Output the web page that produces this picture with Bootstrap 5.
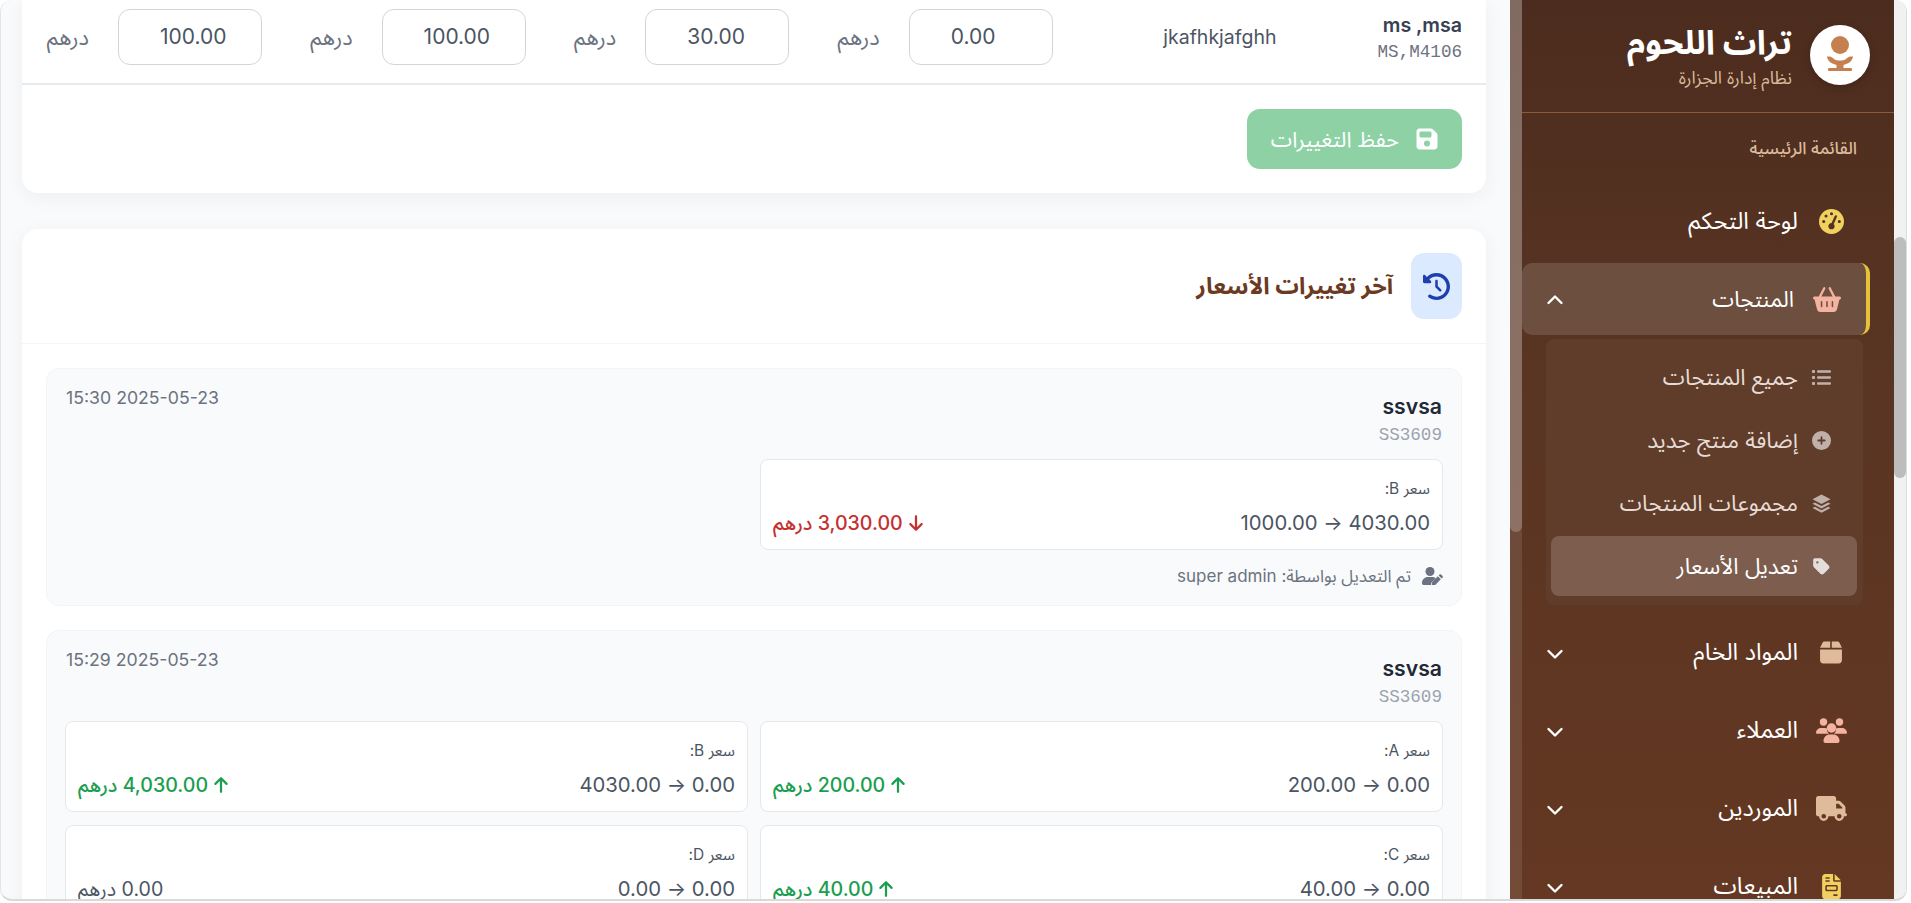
<!DOCTYPE html>
<html lang="ar" dir="rtl">
<head>
<meta charset="utf-8">
<title>تعديل الأسعار</title>
<link href="https://cdn.jsdelivr.net/npm/bootstrap@5.3.0/dist/css/bootstrap.min.css" rel="stylesheet">
<style>
html,body{height:100%;overflow:hidden;background:#fff}
body{font-family:"Inter","Noto Sans Arabic","DejaVu Sans",sans-serif;color:#374151;font-size:16px}
.app-frame{height:901px;width:1907px;margin-right:4px;border-bottom:2px solid #d9d9d9;border-left:1px solid #e5e5e5;border-right:1px solid #dcdcdc;border-radius:12px;overflow:hidden;background:#f9fafb}
/* scrollbars */
.sb-outer{width:12px;flex:none;background:#f1f1f1}
.sb-outer-thumb{height:241px;margin-top:237px;background:#bdbdbd;border-radius:6px}
.sb-inner{width:12px;flex:none;background:rgba(255,255,255,.1)}
.sb-inner-thumb{height:532px;background:rgba(255,255,255,.22);border-radius:0 0 6px 6px}
/* sidebar */
.side-wrap{width:384px;flex:none;background:linear-gradient(180deg,#4c2c1e 0%,#5a3523 45%,#643822 100%)}
.side-body{width:372px;flex:none;height:901px;overflow:hidden}
.side-head{height:113px;border-bottom:1px solid #8a5a3e;padding:25px 24px 0 0;gap:18px}
.logo-disc{width:60px;height:60px;border-radius:50%;background:#fff;flex:none;box-shadow:0 2px 8px rgba(0,0,0,.2)}
.brand-name{font-size:33.3px;font-weight:700;color:#fff;line-height:42px;margin-top:-4px}
.brand-sub{font-size:17.5px;color:#d9b99b;line-height:22px;margin-top:4px}
.menu-label{font-size:17px;font-weight:500;color:#dcbb9d;padding:24px 37px 0 0;line-height:22px;height:72px}
.side-item{height:72px;padding:0 47px 0 24px;margin-bottom:6px;color:#fff;font-size:23.5px;gap:17px;text-decoration:none}
.side-item:hover{color:#fff}
.side-ico{width:32px;flex:none;display:flex;justify-content:center}
.side-item.is-open{background:#6c4f3f;margin-right:24px;padding-right:23px;padding-left:24px;border-right:4px solid #e6c13e;border-radius:10px;margin-bottom:4px;font-size:22px}
.side-chev{margin-right:auto;width:18px;flex:none}
.sub-box{background:#603c2a;border-radius:8px;margin:0 31px 11px 24px;padding:8px 6px 9px 5px}
.sub-item{height:60px;margin-bottom:3px;padding:0 26px 0 0;gap:13px;color:#e6dcd5;font-size:22.3px;border-radius:8px;text-decoration:none}
.sub-item:last-child{margin-bottom:0}
.sub-item.is-on{background:#7c5d4e;color:#fff}
.sub-ico{width:20px;flex:none;display:flex;justify-content:center;opacity:.6}
.sub-item.is-on .sub-ico{opacity:.8}
/* main */
.main-pane{width:1509px;flex:none;padding:0 24px 0 21px}
.panel-box{background:#fff;border-radius:16px;box-shadow:0 4px 20px rgba(0,0,0,.05)}
.panel-top{border-radius:0 0 16px 16px;height:193px;margin-bottom:36px}
.prod-row{height:85px;border-bottom:2px solid #e9eaec;padding:9px 24px 0}
.prod-cell{flex:1 1 auto;min-width:0}
.prod-name{font-weight:600;font-size:19.6px;line-height:24px;color:#374151;margin-top:4px}
.prod-code{font-family:"Liberation Mono",monospace;font-size:17.6px;line-height:24px;color:#6b7280;margin-top:3px}
.batch-cell{flex:0 0 239px;text-align:center;line-height:56px;font-size:19.5px;color:#4b5563}
.price-cell{flex:0 0 263.6px;padding-right:47.6px;gap:29px;height:56px}
.price-input.form-control{width:144px;height:56px;flex:none;border:1px solid #d1d5db;border-radius:12px;text-align:left;font-size:21px;color:#4b5563;padding:0 0 2px 41px;font-family:inherit}
.unit-text{color:#6b7280;font-size:21.8px}
.foot-row{padding:24px}
.save-btn.btn{width:215px;height:60px;background:#8dd1a5;border:0;border-radius:13px;color:#fff;font-size:21.6px;opacity:1;padding:0 24px;gap:17px;display:flex;align-items:center;white-space:nowrap}
.save-btn svg{flex:none}
.head-row{padding:24px;border-bottom:1px solid #f3f4f6;height:115px;gap:18px}
.head-ico{width:51px;height:66px;background:#dbeafe;border-radius:13px;flex:none}
.head-title{font-size:23.4px;font-weight:700;color:#6b3a22;margin:0}
.list-body{padding:24px}
.log-card{background:#f9fafb;border:1px solid #f3f4f6;border-radius:13px;padding:20px 18px 17px;margin-bottom:24px}
.log-head{height:58px;margin-bottom:12px}
.log-name{font-size:21.2px;font-weight:600;color:#1f2937;line-height:30px;margin-top:2px;padding-right:1px}
.log-code{font-family:"Liberation Mono",monospace;font-size:17.6px;line-height:24px;color:#9ca3af;margin-top:2px;padding-right:1px}
.log-date{font-size:17.7px;line-height:20px;color:#6b7280;margin-top:-1px;padding-left:1px}
.diff-grid{display:grid;grid-template-columns:1fr 1fr;gap:13px 12px}
.diff-box{background:#fff;border:1px solid #e5e7eb;border-radius:8px;height:91px;padding:7px 12px 0}
.diff-label{font-size:15.5px;line-height:20px;color:#4b5563;margin-top:12px}
.diff-vals{margin-top:10px;line-height:28px;height:28px}
.diff-nums{font-size:20.3px;color:#4b5563}
.diff-delta{font-size:19.6px;font-weight:500;gap:5px}
.diff-delta svg{flex:none}
.delta-down{color:#c53030}
.delta-up{color:#1a9e4f}
.delta-none{color:#4b5563;font-weight:400}
.log-note{margin-top:14px;line-height:24px;font-size:17px;color:#6b7280;gap:11px}
</style>
</head>
<body>
<div class="app-frame d-flex">
  <div class="sb-outer"><div class="sb-outer-thumb"></div></div>
  <aside class="side-wrap d-flex">
    <div class="side-body">
      <div class="side-head d-flex">
        <div class="logo-disc d-flex align-items-center justify-content-center">
          <svg width="40" height="40" viewBox="0 0 40 40" fill="#c4814f"><circle cx="20" cy="10" r="9"/><path d="M7 21.500c3-.3 5 .3 6.500 2 1.500 1.500 3 2 6.500 2s5-.5 6.500-2c1.500-1.700 3.500-2.300 6.500-2-.5 4-3.500 7-9.500 8.500v3.500h-7v-3.500c-6-1.500-9-4.500-9.500-8.500z"/><rect x="8" y="33" width="24" height="3" rx="1.200"/></svg>
        </div>
        <div>
          <div class="brand-name">تراث اللحوم</div>
          <div class="brand-sub">نظام إدارة الجزارة</div>
        </div>
      </div>
      <div class="menu-label">القائمة الرئيسية</div>
      <nav class="d-flex flex-column">
        <a class="side-item d-flex align-items-center" href="#">
          <span class="side-ico"><svg width="25" height="25" viewBox="0 0 512 512" fill="#f0d160"><path d="M0 256a256 256 0 1 1 512 0A256 256 0 1 1 0 256zM288 96a32 32 0 1 0 -64 0 32 32 0 1 0 64 0zM256 416c35.300 0 64-28.700 64-64c0-17.400-6.900-33.100-18.100-44.600L366 161.700c5.300-12.100-.2-26.300-12.300-31.600s-26.300 .2-31.600 12.300L257.900 288c-.6 0-1.300 0-1.900 0c-35.300 0-64 28.700-64 64s28.700 64 64 64zM176 144a32 32 0 1 0 -64 0 32 32 0 1 0 64 0zM96 288a32 32 0 1 0 0-64 32 32 0 1 0 0 64zm352-32a32 32 0 1 0 -64 0 32 32 0 1 0 64 0z"/></svg></span>
          <span>لوحة التحكم</span>
        </a>
        <a class="side-item is-open d-flex align-items-center" href="#">
          <span class="side-ico"><svg width="28" height="25" viewBox="0 0 576 512" fill="#f4b3a0"><path d="M253.300 35.100c6.100-11.800 1.500-26.300-10.200-32.400s-26.300-1.500-32.400 10.200L117.600 192H32c-17.700 0-32 14.300-32 32s14.300 32 32 32L83.900 463.500C91 492 116.600 512 146 512H430c29.400 0 55-20 62.100-48.500L544 256c17.700 0 32-14.300 32-32s-14.300-32-32-32H458.400L365.300 12.900C359.200 1.200 344.700-3.400 332.900 2.700s-16.300 20.600-10.200 32.400L404.300 192H171.700L253.300 35.100zM192 304v96c0 8.800-7.200 16-16 16s-16-7.200-16-16V304c0-8.800 7.200-16 16-16s16 7.200 16 16zm96-16c8.800 0 16 7.200 16 16v96c0 8.800-7.200 16-16 16s-16-7.200-16-16V304c0-8.800 7.200-16 16-16zm128 16v96c0 8.800-7.200 16-16 16s-16-7.200-16-16V304c0-8.800 7.200-16 16-16s16 7.200 16 16z"/></svg></span>
          <span>المنتجات</span>
          <span class="side-chev"><svg width="18" height="18" viewBox="0 0 18 18" fill="none" stroke="#fff" stroke-width="2.400" stroke-linecap="round" stroke-linejoin="round"><path d="M2.500 11 9 4.500l6.500 6.500"/></svg></span>
        </a>
        <div class="sub-box">
          <a class="sub-item d-flex align-items-center" href="#">
            <span class="sub-ico"><svg width="19" height="17" viewBox="0 0 19 17" fill="#fff"><rect x="0" y="1" width="3" height="3" rx=".8"/><rect x="0" y="7" width="3" height="3" rx=".8"/><rect x="0" y="13" width="3" height="3" rx=".8"/><rect x="5" y="1.300" width="14" height="2.400" rx="1"/><rect x="5" y="7.300" width="14" height="2.400" rx="1"/><rect x="5" y="13.300" width="14" height="2.400" rx="1"/></svg></span>
            <span>جميع المنتجات</span>
          </a>
          <a class="sub-item d-flex align-items-center" href="#">
            <span class="sub-ico"><svg width="19" height="19" viewBox="0 0 512 512" fill="#fff"><path d="M256 512a256 256 0 1 0 0-512 256 256 0 1 0 0 512zM232 344V280H168c-13.300 0-24-10.700-24-24s10.700-24 24-24h64V168c0-13.300 10.700-24 24-24s24 10.700 24 24v64h64c13.300 0 24 10.700 24 24s-10.700 24-24 24H280v64c0 13.300-10.700 24-24 24s-24-10.700-24-24z"/></svg></span>
            <span>إضافة منتج جديد</span>
          </a>
          <a class="sub-item d-flex align-items-center" href="#">
            <span class="sub-ico"><svg width="19" height="19" viewBox="0 0 20 20" fill="#fff"><path d="M10 0.500 19.500 5.500 10 10.500 0.500 5.500z"/><path d="M3 9 0.500 10.200 10 15.200 19.500 10.200 17 9 10 12.600z"/><path d="M3 13.500 0.500 14.700 10 19.700 19.500 14.700 17 13.500 10 17.100z"/></svg></span>
            <span>مجموعات المنتجات</span>
          </a>
          <a class="sub-item is-on d-flex align-items-center" href="#">
            <span class="sub-ico"><svg width="17" height="19" viewBox="0 0 448 512" fill="#fff"><path d="M0 80V229.500c0 17 6.700 33.300 18.700 45.300l176 176c25 25 65.500 25 90.500 0L418.700 317.300c25-25 25-65.500 0-90.500l-176-176c-12-12-28.300-18.700-45.300-18.700H48C21.500 32 0 53.500 0 80zm112 32a32 32 0 1 1 0 64 32 32 0 1 1 0-64z"/></svg></span>
            <span>تعديل الأسعار</span>
          </a>
        </div>
        <a class="side-item d-flex align-items-center" href="#">
          <span class="side-ico"><svg width="22" height="25" viewBox="0 0 448 512" fill="#dfbb9c"><path d="M50.700 58.500L0 160H208V32H93.700C75.500 32 58.900 42.300 50.700 58.500zM240 160H448L397.300 58.500C389.100 42.300 372.500 32 354.300 32H240V160zm208 32H0V416c0 35.300 28.700 64 64 64H384c35.300 0 64-28.700 64-64V192z"/></svg></span>
          <span>المواد الخام</span>
          <span class="side-chev"><svg width="18" height="18" viewBox="0 0 18 18" fill="none" stroke="#fff" stroke-width="2.400" stroke-linecap="round" stroke-linejoin="round"><path d="M2.500 6 9 12.500 15.500 6"/></svg></span>
        </a>
        <a class="side-item d-flex align-items-center" href="#">
          <span class="side-ico"><svg width="31" height="25" viewBox="0 0 31 25" fill="#f4b3a0"><circle cx="7.500" cy="4" r="3.700"/><circle cx="23.500" cy="4" r="3.700"/><circle cx="15.500" cy="10" r="4.700"/><path d="M0 15c0-3 2.500-5 5-5h4c.7 0 1.400.2 2 .5-.2 2 .5 4 2 5.300H1c-.6 0-1-.3-1-.8z"/><path d="M31 15c0-3-2.500-5-5-5h-4c-.7 0-1.400.2-2 .5.200 2-.5 4-2 5.300h12c.6 0 1-.3 1-.8z"/><path d="M7.500 23c0-4 3-6.500 6-6.500h4c3 0 6 2.500 6 6.500 0 1.200-.8 2-2 2h-12c-1.200 0-2-.8-2-2z"/></svg></span>
          <span>العملاء</span>
          <span class="side-chev"><svg width="18" height="18" viewBox="0 0 18 18" fill="none" stroke="#fff" stroke-width="2.400" stroke-linecap="round" stroke-linejoin="round"><path d="M2.500 6 9 12.500 15.500 6"/></svg></span>
        </a>
        <a class="side-item d-flex align-items-center" href="#">
          <span class="side-ico"><svg width="31" height="25" viewBox="0 0 640 512" fill="#dfbb9c"><path d="M48 0C21.500 0 0 21.500 0 48V368c0 26.500 21.500 48 48 48H64c0 53 43 96 96 96s96-43 96-96H384c0 53 43 96 96 96s96-43 96-96h32c17.700 0 32-14.300 32-32s-14.300-32-32-32V288 256 237.300c0-17-6.700-33.300-18.700-45.300L512 114.700c-12-12-28.300-18.700-45.300-18.700H416V48c0-26.500-21.500-48-48-48H48zM416 160h50.700L544 237.300V256H416V160zM112 416a48 48 0 1 1 96 0 48 48 0 1 1 -96 0zm368-48a48 48 0 1 1 0 96 48 48 0 1 1 0-96z"/></svg></span>
          <span>الموردين</span>
          <span class="side-chev"><svg width="18" height="18" viewBox="0 0 18 18" fill="none" stroke="#fff" stroke-width="2.400" stroke-linecap="round" stroke-linejoin="round"><path d="M2.500 6 9 12.500 15.500 6"/></svg></span>
        </a>
        <a class="side-item d-flex align-items-center" href="#">
          <span class="side-ico"><svg width="19" height="25" viewBox="0 0 384 512" fill="#f0d160"><path d="M64 0C28.700 0 0 28.700 0 64V448c0 35.300 28.700 64 64 64H320c35.300 0 64-28.700 64-64V160H256c-17.700 0-32-14.300-32-32V0H64zM256 0V128H384L256 0zM80 64h64c8.800 0 16 7.200 16 16s-7.200 16-16 16H80c-8.800 0-16-7.200-16-16s7.200-16 16-16zm0 64h64c8.800 0 16 7.200 16 16s-7.200 16-16 16H80c-8.800 0-16-7.200-16-16s7.200-16 16-16zm16 96H288c17.700 0 32 14.300 32 32v64c0 17.700-14.300 32-32 32H96c-17.700 0-32-14.300-32-32V256c0-17.700 14.300-32 32-32zm0 32v64H288V256H96zM240 416h64c8.800 0 16 7.200 16 16s-7.200 16-16 16H240c-8.800 0-16-7.200-16-16s7.200-16 16-16z"/></svg></span>
          <span>المبيعات</span>
          <span class="side-chev"><svg width="18" height="18" viewBox="0 0 18 18" fill="none" stroke="#fff" stroke-width="2.400" stroke-linecap="round" stroke-linejoin="round"><path d="M2.500 6 9 12.500 15.500 6"/></svg></span>
        </a>
      </nav>
    </div>
    <div class="sb-inner"><div class="sb-inner-thumb"></div></div>
  </aside>
  <main class="main-pane">
    <section class="panel-box panel-top">
      <div class="prod-row d-flex">
        <div class="prod-cell">
          <div class="prod-name">ms ,msa</div>
          <div class="prod-code">MS,M4106</div>
        </div>
        <div class="batch-cell">jkafhkjafghh</div>
        <div class="price-cell d-flex align-items-center"><input class="form-control price-input" value="0.00"><span class="unit-text">درهم</span></div>
        <div class="price-cell d-flex align-items-center"><input class="form-control price-input" value="30.00"><span class="unit-text">درهم</span></div>
        <div class="price-cell d-flex align-items-center"><input class="form-control price-input" value="100.00"><span class="unit-text">درهم</span></div>
        <div class="price-cell d-flex align-items-center"><input class="form-control price-input" value="100.00"><span class="unit-text">درهم</span></div>
      </div>
      <div class="foot-row">
        <button class="btn save-btn" type="button">
          <svg width="22" height="24" viewBox="0 0 448 512" fill="#fff"><path d="M64 32C28.700 32 0 60.700 0 96V416c0 35.300 28.700 64 64 64H384c35.300 0 64-28.700 64-64V173.300c0-17-6.700-33.300-18.700-45.300L352 50.700C340 38.700 323.700 32 306.700 32H64zm0 96c0-17.700 14.300-32 32-32H288c17.700 0 32 14.300 32 32v64c0 17.700-14.300 32-32 32H96c-17.700 0-32-14.300-32-32V128zM224 288a64 64 0 1 1 0 128 64 64 0 1 1 0-128z"/></svg>
          <span>حفظ التغييرات</span>
        </button>
      </div>
    </section>
    <section class="panel-box">
      <div class="head-row d-flex align-items-center">
        <div class="head-ico d-flex align-items-center justify-content-center">
          <svg width="27" height="27" viewBox="0 0 512 512" fill="#1e40af"><path d="M75 75L41 41C25.900 25.900 0 36.600 0 57.900V168c0 13.300 10.700 24 24 24H134.100c21.400 0 32.100-25.900 17-41l-30.800-30.800C155 85.500 203 64 256 64c106 0 192 86 192 192s-86 192-192 192c-40.800 0-78.600-12.700-109.700-34.400c-14.500-10.100-34.400-6.600-44.600 7.900s-6.600 34.400 7.900 44.600C151.200 495 201.700 512 256 512c141.400 0 256-114.600 256-256S397.400 0 256 0C185.300 0 121.300 28.700 75 75zm181 53c-13.300 0-24 10.700-24 24V256c0 6.400 2.500 12.500 7 17l72 72c9.400 9.400 24.600 9.400 33.900 0s9.400-24.600 0-33.900l-65-65V152c0-13.300-10.700-24-24-24z"/></svg>
        </div>
        <h2 class="head-title">آخر تغييرات الأسعار</h2>
      </div>
      <div class="list-body">
        <article class="log-card">
          <div class="log-head d-flex justify-content-between">
            <div><div class="log-name">ssvsa</div><div class="log-code">SS3609</div></div>
            <div class="log-date">2025-05-23 15:30</div>
          </div>
          <div class="diff-grid">
            <div class="diff-box">
              <div class="diff-label">سعر B:</div>
              <div class="diff-vals d-flex justify-content-between align-items-center">
                <span class="diff-nums">4030.00 → 1000.00</span>
                <span class="diff-delta delta-down d-flex align-items-center">
                  <svg width="16" height="18" viewBox="0 0 384 512" fill="currentColor"><path d="M169.400 470.600c12.500 12.500 32.800 12.500 45.300 0l160-160c12.500-12.500 12.500-32.800 0-45.300s-32.800-12.500-45.300 0L224 370.800V64c0-17.700-14.300-32-32-32s-32 14.300-32 32V370.700L54.600 265.400c-12.500-12.500-32.800-12.500-45.300 0s-12.500 32.800 0 45.300l160 160z"/></svg>
                  <span>3,030.00 درهم</span>
                </span>
              </div>
            </div>
          </div>
          <div class="log-note d-flex align-items-center">
            <svg width="21" height="18" viewBox="0 0 21 18" fill="currentColor"><circle cx="8" cy="4.500" r="4.500"/><path d="M0 16c0-3.500 2.800-6 6-6h4c1.500 0 2.800.5 3.800 1.300L9.500 15.600 9 18H1.500C.6 18 0 17.200 0 16z"/><path d="M19 8.700l1.600 1.600c.4.4.4 1 0 1.400l-1 1-3-3 1-1c.4-.4 1-.4 1.400 0zM15.800 10.500l3 3-5.600 5.600-3.400.4.400-3.400z" transform="translate(0 -1.200)"/></svg>
            <span>تم التعديل بواسطة: super admin</span>
          </div>
        </article>
        <article class="log-card">
          <div class="log-head d-flex justify-content-between">
            <div><div class="log-name">ssvsa</div><div class="log-code">SS3609</div></div>
            <div class="log-date">2025-05-23 15:29</div>
          </div>
          <div class="diff-grid">
            <div class="diff-box">
              <div class="diff-label">سعر A:</div>
              <div class="diff-vals d-flex justify-content-between align-items-center">
                <span class="diff-nums">0.00 → 200.00</span>
                <span class="diff-delta delta-up d-flex align-items-center">
                  <svg width="16" height="18" viewBox="0 0 384 512" fill="currentColor"><path d="M214.600 41.400c-12.500-12.500-32.800-12.500-45.300 0l-160 160c-12.500 12.500-12.500 32.800 0 45.300s32.800 12.500 45.300 0L160 141.200V448c0 17.700 14.300 32 32 32s32-14.300 32-32V141.200L329.400 246.600c12.500 12.500 32.800 12.500 45.300 0s12.500-32.800 0-45.300l-160-160z"/></svg>
                  <span>200.00 درهم</span>
                </span>
              </div>
            </div>
            <div class="diff-box">
              <div class="diff-label">سعر B:</div>
              <div class="diff-vals d-flex justify-content-between align-items-center">
                <span class="diff-nums">0.00 → 4030.00</span>
                <span class="diff-delta delta-up d-flex align-items-center">
                  <svg width="16" height="18" viewBox="0 0 384 512" fill="currentColor"><path d="M214.600 41.400c-12.500-12.500-32.800-12.500-45.300 0l-160 160c-12.500 12.500-12.500 32.800 0 45.300s32.800 12.500 45.300 0L160 141.200V448c0 17.700 14.300 32 32 32s32-14.300 32-32V141.200L329.400 246.600c12.500 12.500 32.800 12.500 45.300 0s12.500-32.800 0-45.300l-160-160z"/></svg>
                  <span>4,030.00 درهم</span>
                </span>
              </div>
            </div>
            <div class="diff-box">
              <div class="diff-label">سعر C:</div>
              <div class="diff-vals d-flex justify-content-between align-items-center">
                <span class="diff-nums">0.00 → 40.00</span>
                <span class="diff-delta delta-up d-flex align-items-center">
                  <svg width="16" height="18" viewBox="0 0 384 512" fill="currentColor"><path d="M214.600 41.400c-12.500-12.500-32.800-12.500-45.300 0l-160 160c-12.500 12.500-12.500 32.800 0 45.300s32.800 12.500 45.300 0L160 141.200V448c0 17.700 14.300 32 32 32s32-14.300 32-32V141.200L329.400 246.600c12.500 12.500 32.800 12.500 45.300 0s12.500-32.800 0-45.300l-160-160z"/></svg>
                  <span>40.00 درهم</span>
                </span>
              </div>
            </div>
            <div class="diff-box">
              <div class="diff-label">سعر D:</div>
              <div class="diff-vals d-flex justify-content-between align-items-center">
                <span class="diff-nums">0.00 → 0.00</span>
                <span class="diff-delta delta-none d-flex align-items-center"><span>0.00 درهم</span></span>
              </div>
            </div>
          </div>
        </article>
      </div>
    </section>
  </main>
</div>
<script src="https://cdn.jsdelivr.net/npm/bootstrap@5.3.0/dist/js/bootstrap.bundle.min.js"></script>
</body>
</html>
